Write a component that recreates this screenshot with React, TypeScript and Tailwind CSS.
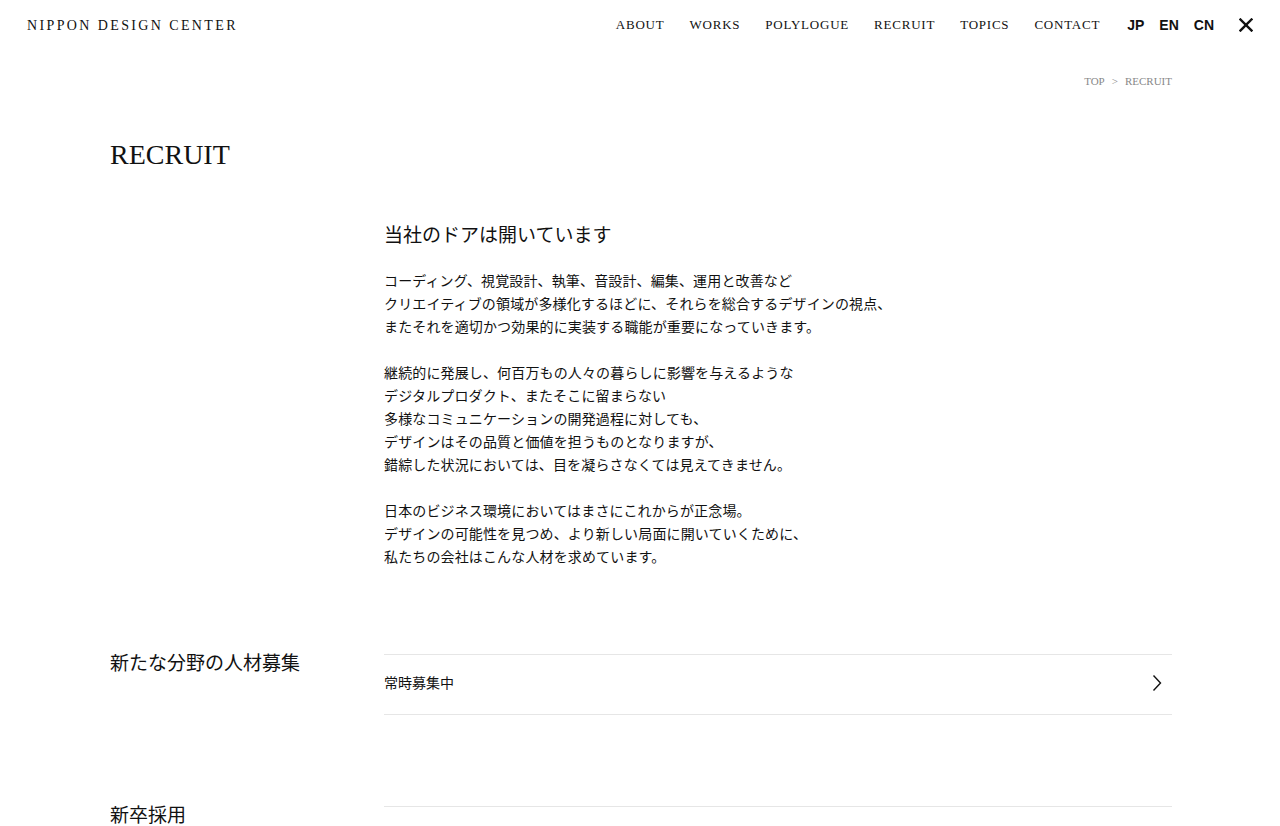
import React from 'react';

const serif = "font-['Liberation_Serif','Noto_Sans_CJK_JP',serif]";
const jp = "font-['Liberation_Serif','Noto_Sans_CJK_JP',serif]";

const navItems = ['ABOUT', 'WORKS', 'POLYLOGUE', 'RECRUIT', 'TOPICS', 'CONTACT'];
const langs = ['JP', 'EN', 'CN'];

const paragraphs = [
  [
    'コーディング、視覚設計、執筆、音設計、編集、運用と改善など',
    'クリエイティブの領域が多様化するほどに、それらを総合するデザインの視点、',
    'またそれを適切かつ効果的に実装する職能が重要になっていきます。',
  ],
  [
    '継続的に発展し、何百万もの人々の暮らしに影響を与えるような',
    'デジタルプロダクト、またそこに留まらない',
    '多様なコミュニケーションの開発過程に対しても、',
    'デザインはその品質と価値を担うものとなりますが、',
    '錯綜した状況においては、目を凝らさなくては見えてきません。',
  ],
  [
    '日本のビジネス環境においてはまさにこれからが正念場。',
    'デザインの可能性を見つめ、より新しい局面に開いていくために、',
    '私たちの会社はこんな人材を求めています。',
  ],
];

const Chevron = () => (
  <svg width="10" height="18" viewBox="0 0 10 18" fill="none" stroke="#111" strokeWidth="1.4">
    <polyline points="1.5,1.5 8.5,9 1.5,16.5" />
  </svg>
);

const Close = () => (
  <svg width="14" height="14" viewBox="0 0 14 14" stroke="#111" strokeWidth="2.4" strokeLinecap="square">
    <line x1="1.5" y1="1.5" x2="12.5" y2="12.5" />
    <line x1="12.5" y1="1.5" x2="1.5" y2="12.5" />
  </svg>
);

export default function App() {
  return (
    <div className="min-h-screen bg-white text-[#111]">
      <header className="flex h-[50px] items-center justify-between pl-[27px] pr-[27px]">
        <div className={`${serif} text-[14px] tracking-[0.17em]`}>NIPPON DESIGN CENTER</div>
        <div className="flex items-center">
          <nav className={`${serif} flex gap-[25px] text-[13px] tracking-[0.06em]`}>
            {navItems.map((n) => (
              <span key={n}>{n}</span>
            ))}
          </nav>
          <div className="ml-[27px] flex gap-[15px] font-['Liberation_Sans',sans-serif] text-[14px] font-bold">
            {langs.map((l) => (
              <span key={l}>{l}</span>
            ))}
          </div>
          <div className="ml-[25px] flex items-center">
            <Close />
          </div>
        </div>
      </header>

      <main className="pl-[110px] pr-[108px]">
        <div className={`${serif} mt-[23px] flex justify-end gap-[7px] text-[11px] leading-[16px] text-[#888]`}>
          <span>TOP</span>
          <span>&gt;</span>
          <span>RECRUIT</span>
        </div>

        <h1 className={`${serif} mt-[52px] text-[28px] leading-[28px]`}>RECRUIT</h1>

        <section className="mt-[53px] flex">
          <div className="w-[274px] shrink-0" />
          <div className={`${jp} flex-1`}>
            <h2 className="text-[19px] leading-[28px]">当社のドアは開いています</h2>
            <div className="mt-[20px] text-[14px] leading-[23px] tracking-[0.01em]">
              {paragraphs.map((p, i) => (
                <p key={i} className={i > 0 ? 'mt-[23px]' : ''}>
                  {p.map((line) => (
                    <React.Fragment key={line}>
                      {line}
                      <br />
                    </React.Fragment>
                  ))}
                </p>
              ))}
            </div>
          </div>
        </section>

        <section className={`${jp} mt-[85px] flex`}>
          <h2 className="w-[274px] shrink-0 text-[19px] leading-[20px]">新たな分野の人材募集</h2>
          <div className="flex-1">
            <div className="flex h-[61px] items-center justify-between border-y border-[#e6e6e6] pr-[10px] pb-[3px] text-[14px]">
              <span>常時募集中</span>
              <Chevron />
            </div>
          </div>
        </section>

        <section className={`${jp} mt-[91px] flex pb-[40px]`}>
          <h2 className="w-[274px] shrink-0 text-[19px] leading-[20px]">新卒採用</h2>
          <div className="flex-1">
            <div className="h-[61px] border-t border-[#e6e6e6]" />
          </div>
        </section>
      </main>
    </div>
  );
}
